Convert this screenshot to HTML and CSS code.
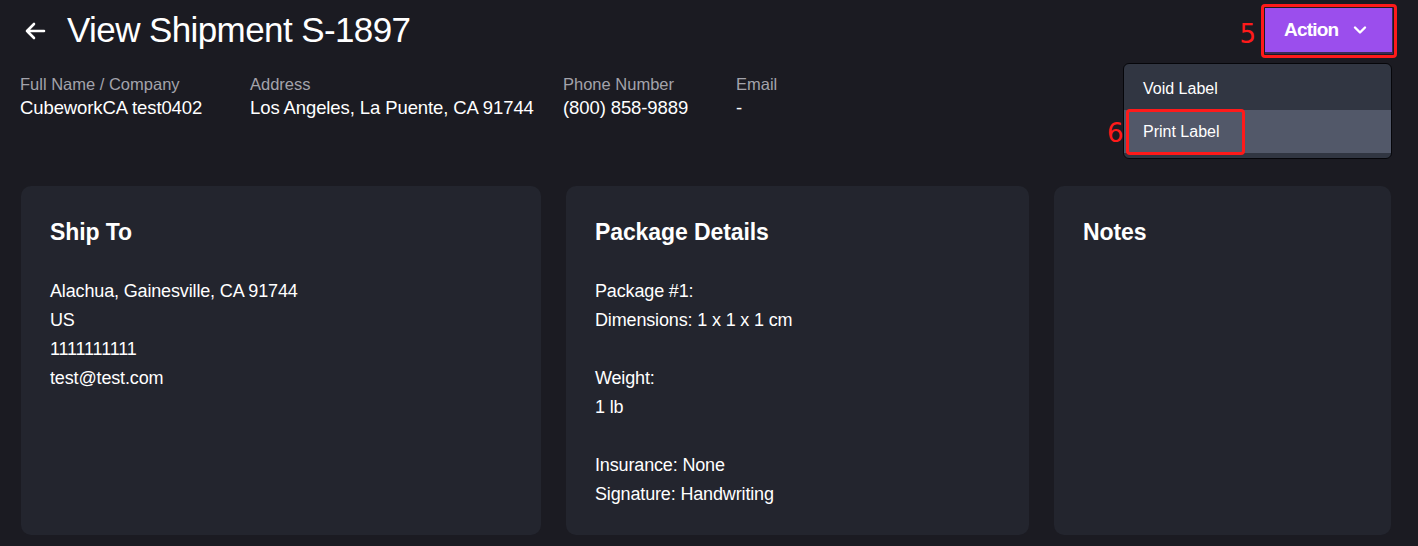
FILE: index.html
```html
<!DOCTYPE html>
<html>
<head>
<meta charset="utf-8">
<link rel="stylesheet" href="styles.css">
</head>
<body>
<div class="page">
  <header class="head">
    <div class="title-row">
      <svg class="back" width="22" height="18" viewBox="0 0 22 18"><path d="M20 9H3M10 2L3 9l7 7" fill="none" stroke="#fff" stroke-width="2.6" stroke-linecap="round" stroke-linejoin="round"/></svg>
      <h1 class="title">View Shipment S-1897</h1>
    </div>
    <div class="actions">
      <span class="anno anno5">5</span>
      <div class="anno-box btn-box">
        <button class="action-btn">Action
          <svg width="14" height="10" viewBox="0 0 14 10"><path d="M2 2.5l5 5 5-5" fill="none" stroke="#fff" stroke-width="2.4" stroke-linecap="round" stroke-linejoin="round"/></svg>
        </button>
      </div>
      <div class="menu">
        <div class="menu-item">Void Label</div>
        <div class="menu-item active">
          <span class="anno anno6">6</span>
          <div class="anno-box item-box"></div>
          Print Label</div>
      </div>
    </div>
  </header>
  <div class="info">
    <div class="field w1"><div class="label">Full Name / Company</div><div class="value">CubeworkCA test0402</div></div>
    <div class="field w2"><div class="label">Address</div><div class="value">Los Angeles, La Puente, CA 91744</div></div>
    <div class="field w3"><div class="label">Phone Number</div><div class="value">(800) 858-9889</div></div>
    <div class="field"><div class="label">Email</div><div class="value">-</div></div>
  </div>
  <div class="cards">
    <section class="card">
      <h2>Ship To</h2>
      <div class="body">Alachua, Gainesville, CA 91744<br>US<br>1111111111<br>test@test.com</div>
    </section>
    <section class="card">
      <h2>Package Details</h2>
      <div class="body">Package #1:<br>Dimensions: 1 x 1 x 1 cm<br><br>Weight:<br>1 lb<br><br>Insurance: None<br>Signature: Handwriting</div>
    </section>
    <section class="card">
      <h2>Notes</h2>
    </section>
  </div>
</div>
</body>
</html>
```

FILE: styles.css
```css
* { box-sizing: border-box; }
html, body { margin: 0; padding: 0; }
body {
  background: #1b1b22;
  color: #fff;
  font-family: "Liberation Sans", Arial, sans-serif;
  width: 1418px;
  height: 546px;
  overflow: hidden;
}
.page { padding: 0 26px 0 20px; }
.head {
  display: flex;
  justify-content: space-between;
  align-items: flex-start;
  height: 66px;
}
.title-row {
  display: flex;
  align-items: center;
  padding-top: 10px;
  padding-left: 4px;
}
.back { margin-right: 21px; margin-top: 2px; }
.title {
  margin: 0;
  font-size: 35px;
  font-weight: 400;
  letter-spacing: -0.6px;
  line-height: 40px;
}
.actions {
  position: relative;
  display: flex;
  align-items: center;
  padding-top: 4px;
  margin-right: -5px;
}
.anno {
  color: #ff1a1a;
  font-size: 26px;
  font-family: "DejaVu Sans", sans-serif;
  font-weight: 400;
  line-height: 1;
}
.anno5 { margin-right: 5px; margin-top: 6px; }
.anno-box {
  border: 3px solid #ff1a1a;
  border-radius: 4px;
}
.btn-box { padding: 1px; }
.action-btn {
  display: flex;
  align-items: center;
  gap: 15px;
  width: 128px;
  height: 46px;
  justify-content: flex-start;
  background: #9b4eed;
  border: none;
  border-bottom: 2px solid #3b2a55;
  border-right: 1px solid #3b2a55;
  color: #fff;
  font-family: "Liberation Sans", Arial, sans-serif;
  font-size: 19px;
  font-weight: 700;
  letter-spacing: -0.8px;
  padding: 0 0 0 19px;
}
.menu {
  position: absolute;
  top: 63px;
  right: 5px;
  width: 269px;
  background: #313642;
  border: 1px solid #06060a;
  border-radius: 6px;
  padding-bottom: 5px;
  z-index: 5;
}
.menu-item {
  position: relative;
  height: 46px;
  padding: 15px 19px 0;
  font-size: 16px;
  letter-spacing: 0;
}
.menu-item:first-child { height: 46px; padding-top: 16px; border-radius: 6px 6px 0 0; }
.menu-item.active { background: #525869; height: 43px; padding-top: 13px; }
.item-box {
  position: absolute;
  left: 2px;
  top: -1px;
  width: 119px;
  height: 46px;
}
.anno6 { position: absolute; left: -17px; top: 10px; }
.info {
  display: flex;
  margin-top: 8px;
}
.w1 { width: 230px; }
.w2 { width: 313px; }
.w3 { width: 173px; }
.label {
  color: #a3a3ab;
  font-size: 16.5px;
  letter-spacing: 0;
  line-height: 20px;
}
.value {
  font-size: 18.5px;
  letter-spacing: -0.1px;
  line-height: 26px;
  margin-top: 1px;
}
.cards {
  display: grid;
  grid-template-columns: 520px 463px 337px;
  gap: 25px;
  margin-top: 65px;
  padding-left: 1px;
}
.card {
  background: #23252e;
  border-radius: 10px;
  height: 349px;
  padding: 32px 29px;
}
.card h2 {
  margin: 0;
  font-size: 23px;
  font-weight: 700;
  letter-spacing: -0.1px;
  line-height: 28px;
}
.body {
  margin-top: 31px;
  font-size: 18px;
  line-height: 29px;
  letter-spacing: -0.15px;
}
```
